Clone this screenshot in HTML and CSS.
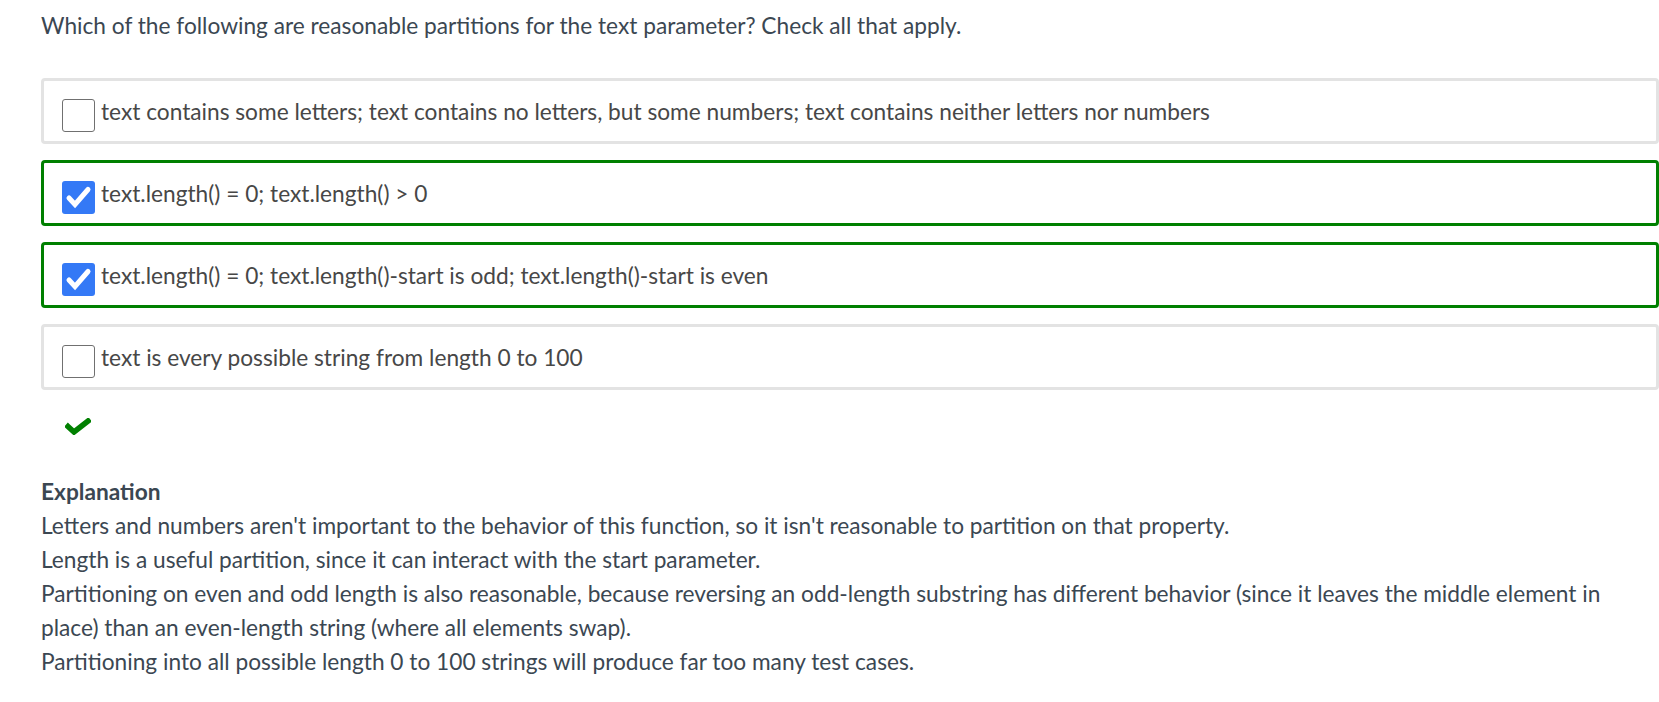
FILE: index.html
```html
<!DOCTYPE html>
<html lang="en">
<head>
<meta charset="utf-8">
<title>Quiz</title>
<link rel="stylesheet" href="styles.css">
</head>
<body>
<main class="quiz">
  <p class="question">Which of the following are reasonable partitions for the text parameter? Check all that apply.</p>
  <ul class="options">
    <li class="option">
      <span class="box"></span>
      <span class="label">text contains some letters; text contains no letters, but some numbers; text contains neither letters nor numbers</span>
    </li>
    <li class="option correct">
      <span class="box checked"><svg viewBox="0 0 33 33" width="33" height="33"><polyline points="7,17 13,23.5 26,8.5" fill="none" stroke="#fff" stroke-width="5" stroke-linecap="round" stroke-linejoin="miter"/></svg></span>
      <span class="label">text.length() = 0; text.length() &gt; 0</span>
    </li>
    <li class="option correct">
      <span class="box checked"><svg viewBox="0 0 33 33" width="33" height="33"><polyline points="7,17 13,23.5 26,8.5" fill="none" stroke="#fff" stroke-width="5" stroke-linecap="round" stroke-linejoin="miter"/></svg></span>
      <span class="label">text.length() = 0; text.length()-start is odd; text.length()-start is even</span>
    </li>
    <li class="option">
      <span class="box"></span>
      <span class="label">text is every possible string from length 0 to 100</span>
    </li>
  </ul>
  <div class="result"><svg viewBox="0 0 26 17" width="26" height="17"><polyline points="3,8.5 9,14 23,3" fill="none" stroke="#008000" stroke-width="5.5" stroke-linecap="square" stroke-linejoin="miter"/></svg></div>
  <section class="explanation">
    <h3 class="exp-title">Explanation</h3>
    <p class="exp-line">Letters and numbers aren't important to the behavior of this function, so it isn't reasonable to partition on that property.</p>
    <p class="exp-line">Length is a useful partition, since it can interact with the start parameter.</p>
    <p class="exp-line">Partitioning on even and odd length is also reasonable, because reversing an odd-length substring has different behavior (since it leaves the middle element in place) than an even-length string (where all elements swap).</p>
    <p class="exp-line">Partitioning into all possible length 0 to 100 strings will produce far too many test cases.</p>
  </section>
</main>
</body>
</html>
```

FILE: styles.css
```css
html, body {
  margin: 0;
  padding: 0;
  background: #ffffff;
}
body {
  font-family: Lato, "Open Sans", sans-serif;
  font-size: 22.7px;
  line-height: 34px;
  color: #3b4752;
}
.quiz {
  margin-left: 41px;
  width: 1618px;
  padding-top: 9px;
}
.question {
  margin: 0 0 35px 0;
}
.options {
  list-style: none;
  margin: 0;
  padding: 0;
  display: flex;
  flex-direction: column;
  gap: 16px;
}
.option {
  display: flex;
  align-items: flex-start;
  border: 3px solid #e3e3e3;
  border-radius: 4px;
  padding: 14px 0 9px 18px;
  color: #474747;
}
.option.correct {
  border-color: #008000;
}
.box {
  flex: none;
  box-sizing: border-box;
  width: 33px;
  height: 33px;
  margin-top: 4px;
  border: 1px solid #707070;
  border-radius: 3px;
  background: #fff;
}
.box.checked {
  border: none;
  background: #3479f6;
}
.box svg {
  display: block;
}
.label {
  margin-left: 6px;
}
.result {
  margin: 28px 0 0 24px;
  height: 17px;
}
.result svg {
  display: block;
}
.explanation {
  margin-top: 40px;
}
.exp-title {
  margin: 0;
  font-size: 22.7px;
  font-weight: 700;
  line-height: 34px;
}
.exp-line {
  margin: 0;
}
```
